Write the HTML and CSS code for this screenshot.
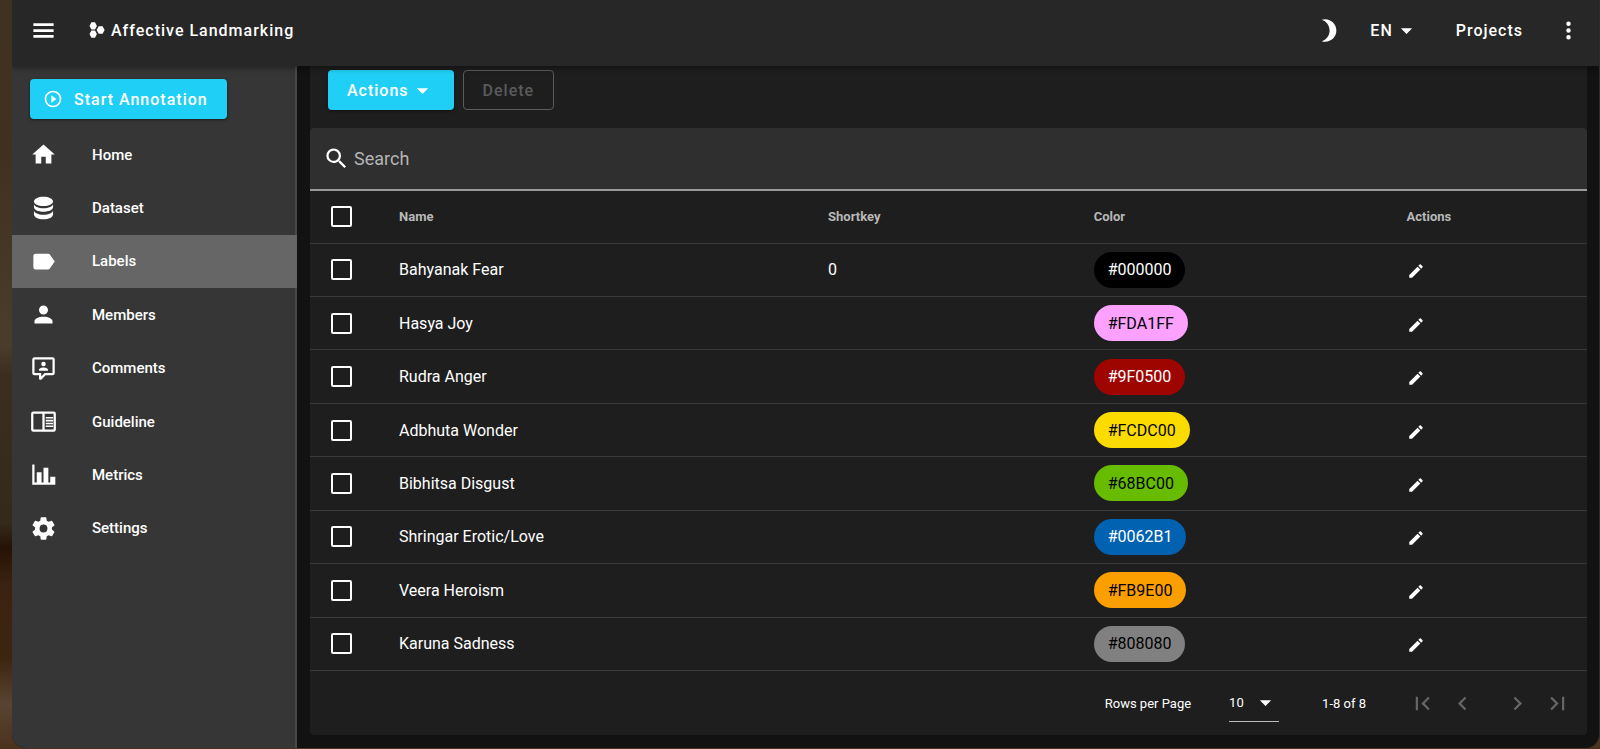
FILE: index.html
```
<!DOCTYPE html>
<html lang="en">
<head>
    <meta charset="UTF-8">
    <meta name="viewport" content="width=device-width, initial-scale=1.0">
    <title>Affective Landmarking</title>
    <link rel="stylesheet" href="styles.css">
</head>
<body>

    <!-- shared icons -->
    <svg class="sprite" aria-hidden="true">
        <symbol id="caret" viewBox="0 0 24 24"><path d="M7,10L12,15L17,10H7Z"/></symbol>
        <symbol id="pencil" viewBox="0 0 24 24"><path d="M20.71,7.04C21.1,6.65 21.1,6 20.71,5.63L18.37,3.29C18,2.9 17.35,2.9 16.96,3.29L15.12,5.12L18.87,8.87M3,17.25V21H6.75L17.81,9.93L14.06,6.18L3,17.25Z"/></symbol>
    </svg>

    <div class="window">

        <!-- top bar -->
        <header class="topbar">
            <button class="icon-btn" aria-label="Menu">
                <svg class="icon" viewBox="0 0 24 24"><path d="M3,5.6H21V8.1H3V5.6M3,10.8H21V13.3H3V10.8M3,16H21V18.5H3V16Z"/></svg>
            </button>
            <a class="brand" href="#">
                <svg class="brand-icon" viewBox="0 0 16 16"><path d="M2.4,0.2H6L7.9,3.9L6,7.6H2.4L0.5,3.9ZM2.4,8.4H6L7.9,12.1L6,15.8H2.4L0.5,12.1ZM9.7,4.2H13.6L15.6,8L13.6,11.8H9.7L7.6,8Z"/></svg>
                Affective Landmarking
            </a>
            <div class="spacer"></div>
            <button class="icon-btn" aria-label="Dark mode">
                <svg class="icon" viewBox="0 0 24 24"><path d="M9 2c-1.05 0-2.05.16-3 .46 4.06 1.27 7 5.06 7 9.54 0 4.48-2.94 8.27-7 9.54.95.3 1.95.46 3 .46 5.52 0 10-4.48 10-10S14.52 2 9 2z"/></svg>
            </button>
            <button class="text-btn lang-btn">EN <svg class="icon" viewBox="0 0 24 24"><use href="#caret"/></svg></button>
            <a class="text-btn" href="#">Projects</a>
            <button class="icon-btn more-btn" aria-label="More">
                <svg class="icon" viewBox="0 0 24 24"><path d="M12,16A2,2 0 0,1 14,18A2,2 0 0,1 12,20A2,2 0 0,1 10,18A2,2 0 0,1 12,16M12,10A2,2 0 0,1 14,12A2,2 0 0,1 12,14A2,2 0 0,1 10,12A2,2 0 0,1 12,10M12,4A2,2 0 0,1 14,6A2,2 0 0,1 12,8A2,2 0 0,1 10,6A2,2 0 0,1 12,4Z"/></svg>
            </button>
        </header>

        <div class="layout">

            <!-- sidebar -->
            <aside class="sidebar">
                <button class="btn btn-primary start-btn">
                    <svg class="icon-small" viewBox="0 0 24 24"><path d="M12,20C7.59,20 4,16.41 4,12C4,7.59 7.59,4 12,4C16.41,4 20,7.59 20,12C20,16.41 16.41,20 12,20M12,2A10,10 0 0,0 2,12A10,10 0 0,0 12,22A10,10 0 0,0 22,12A10,10 0 0,0 12,2M10,16.5L16,12L10,7.5V16.5Z"/></svg>
                    Start Annotation
                </button>
                <nav class="menu">
                    <a href="#"><svg class="icon" viewBox="0 0 24 24"><path d="M10,20V14H14V20H19V12H22L12,3L2,12H5V20H10Z"/></svg>Home</a>
                    <a href="#"><svg class="icon" viewBox="0 0 24 24"><path d="M12,1.5C7.3,1.5 3.5,3.4 3.5,5.7C3.5,8 7.3,9.8 12,9.8C16.7,9.8 20.5,8 20.5,5.7C20.5,3.4 16.7,1.5 12,1.5M3.5,8.2V10.6C3.5,13 7.3,14.8 12,14.8C16.7,14.8 20.5,13 20.5,10.6V8.2C20,10.2 16.7,11.8 12,11.8C7.3,11.8 4,10.2 3.5,8.2M3.5,14V17C3.5,19.7 7.3,21.5 12,21.5C16.7,21.5 20.5,19.7 20.5,17V14C20,16 16.7,17.6 12,17.6C7.3,17.6 4,16 3.5,14Z"/></svg>Dataset</a>
                    <a href="#" class="active"><svg class="icon" viewBox="0 0 24 24"><path d="M17.63,5.84C17.27,5.33 16.67,5 16,5H5A2,2 0 0,0 3,7V17A2,2 0 0,0 5,19H16C16.67,19 17.27,18.66 17.63,18.15L22,12L17.63,5.84Z"/></svg>Labels</a>
                    <a href="#"><svg class="icon" viewBox="0 0 24 24"><path d="M12,4A4,4 0 0,1 16,8A4,4 0 0,1 12,12A4,4 0 0,1 8,8A4,4 0 0,1 12,4M12,14C16.42,14 20,15.79 20,18V20H4V18C4,15.79 7.58,14 12,14Z"/></svg>Members</a>
                    <a href="#"><svg class="icon" viewBox="0 0 24 24"><path d="M9,22A1,1 0 0,1 8,21V18H4A2,2 0 0,1 2,16V4C2,2.89 2.9,2 4,2H20A2,2 0 0,1 22,4V16A2,2 0 0,1 20,18H13.9L10.2,21.71C10,21.9 9.75,22 9.5,22H9M10,16V19.08L13.08,16H20V4H4V16H10M16,14H8V13C8,11.67 10.67,11 12,11C13.33,11 16,11.67 16,13V14M12,6A2,2 0 0,1 14,8A2,2 0 0,1 12,10A2,2 0 0,1 10,8A2,2 0 0,1 12,6Z"/></svg>Comments</a>
                    <a href="#"><svg class="icon" viewBox="0 0 24 24"><path d="M21,3H3A2,2 0 0,0 1,5V19A2,2 0 0,0 3,21H21A2,2 0 0,0 23,19V5A2,2 0 0,0 21,3M3,19V5H11V19H3M21,19H13V5H21V19M14,8H20.5V9.4H14V8M14,10.5H20.5V11.9H14V10.5M14,13H20.5V14.4H14V13M14,15.5H20.5V16.9H14V15.5Z"/></svg>Guideline</a>
                    <a href="#"><svg class="icon" viewBox="0 0 24 24"><path d="M22.5,21H2V3H4V19H6V10H10.3V19H12V6H16.3V19H18V14H22.5V21Z"/></svg>Metrics</a>
                    <a href="#"><svg class="icon" viewBox="0 0 24 24"><path d="M12,15.5A3.5,3.5 0 0,1 8.5,12A3.5,3.5 0 0,1 12,8.5A3.5,3.5 0 0,1 15.5,12A3.5,3.5 0 0,1 12,15.5M19.43,12.97C19.47,12.65 19.5,12.33 19.5,12C19.5,11.67 19.47,11.34 19.43,11L21.54,9.37C21.73,9.22 21.78,8.95 21.66,8.73L19.66,5.27C19.54,5.05 19.27,4.96 19.05,5.05L16.56,6.05C16.04,5.66 15.5,5.32 14.87,5.07L14.5,2.42C14.46,2.18 14.25,2 14,2H10C9.75,2 9.54,2.18 9.5,2.42L9.13,5.07C8.5,5.32 7.96,5.66 7.44,6.05L4.95,5.05C4.73,4.96 4.46,5.05 4.34,5.27L2.34,8.73C2.21,8.95 2.27,9.22 2.46,9.37L4.57,11C4.53,11.34 4.5,11.67 4.5,12C4.5,12.33 4.53,12.65 4.57,12.97L2.46,14.63C2.27,14.78 2.21,15.05 2.34,15.27L4.34,18.73C4.46,18.95 4.73,19.03 4.95,18.95L7.44,17.94C7.96,18.34 8.5,18.68 9.13,18.93L9.5,21.58C9.54,21.82 9.75,22 10,22H14C14.25,22 14.46,21.82 14.5,21.58L14.87,18.93C15.5,18.67 16.04,18.34 16.56,17.94L19.05,18.95C19.27,19.03 19.54,18.95 19.66,18.73L21.66,15.27C21.78,15.05 21.73,14.78 21.54,14.63L19.43,12.97Z"/></svg>Settings</a>
                </nav>
            </aside>

            <!-- labels table -->
            <main class="content">
                <div class="card">
                    <div class="toolbar">
                        <button class="btn btn-primary actions-btn">Actions <svg class="icon" viewBox="0 0 24 24"><use href="#caret"/></svg></button>
                        <button class="btn btn-outline" disabled>Delete</button>
                    </div>

                    <label class="search">
                        <svg class="icon" viewBox="0 0 24 24"><path d="M9.5,3A6.5,6.5 0 0,1 16,9.5C16,11.11 15.41,12.59 14.44,13.73L14.71,14H15.5L20.5,19L19,20.5L14,15.5V14.71L13.73,14.44C12.59,15.41 11.11,16 9.5,16A6.5,6.5 0 0,1 3,9.5A6.5,6.5 0 0,1 9.5,3M9.5,5C7,5 5,7 5,9.5C5,12 7,14 9.5,14C12,14 14,12 14,9.5C14,7 12,5 9.5,5Z"/></svg>
                        <input type="text" placeholder="Search" aria-label="Search">
                    </label>

                    <table class="labels">
                        <thead>
                            <tr>
                                <th class="col-check"><input type="checkbox" aria-label="Select all"></th>
                                <th class="col-name">Name</th>
                                <th class="col-key">Shortkey</th>
                                <th class="col-color">Color</th>
                                <th>Actions</th>
                            </tr>
                        </thead>
                        <tbody>
                            <tr>
                                <td class="col-check"><input type="checkbox" aria-label="Bahyanak Fear"></td>
                                <td>Bahyanak Fear</td>
                                <td>0</td>
                                <td><span class="chip chip-black">#000000</span></td>
                                <td><button class="edit-btn" aria-label="Edit"><svg class="icon-edit" viewBox="0 0 24 24"><use href="#pencil"/></svg></button></td>
                            </tr>
                            <tr>
                                <td class="col-check"><input type="checkbox" aria-label="Hasya Joy"></td>
                                <td>Hasya Joy</td>
                                <td></td>
                                <td><span class="chip chip-pink">#FDA1FF</span></td>
                                <td><button class="edit-btn" aria-label="Edit"><svg class="icon-edit" viewBox="0 0 24 24"><use href="#pencil"/></svg></button></td>
                            </tr>
                            <tr>
                                <td class="col-check"><input type="checkbox" aria-label="Rudra Anger"></td>
                                <td>Rudra Anger</td>
                                <td></td>
                                <td><span class="chip chip-red">#9F0500</span></td>
                                <td><button class="edit-btn" aria-label="Edit"><svg class="icon-edit" viewBox="0 0 24 24"><use href="#pencil"/></svg></button></td>
                            </tr>
                            <tr>
                                <td class="col-check"><input type="checkbox" aria-label="Adbhuta Wonder"></td>
                                <td>Adbhuta Wonder</td>
                                <td></td>
                                <td><span class="chip chip-yellow">#FCDC00</span></td>
                                <td><button class="edit-btn" aria-label="Edit"><svg class="icon-edit" viewBox="0 0 24 24"><use href="#pencil"/></svg></button></td>
                            </tr>
                            <tr>
                                <td class="col-check"><input type="checkbox" aria-label="Bibhitsa Disgust"></td>
                                <td>Bibhitsa Disgust</td>
                                <td></td>
                                <td><span class="chip chip-green">#68BC00</span></td>
                                <td><button class="edit-btn" aria-label="Edit"><svg class="icon-edit" viewBox="0 0 24 24"><use href="#pencil"/></svg></button></td>
                            </tr>
                            <tr>
                                <td class="col-check"><input type="checkbox" aria-label="Shringar Erotic/Love"></td>
                                <td>Shringar Erotic/Love</td>
                                <td></td>
                                <td><span class="chip chip-blue">#0062B1</span></td>
                                <td><button class="edit-btn" aria-label="Edit"><svg class="icon-edit" viewBox="0 0 24 24"><use href="#pencil"/></svg></button></td>
                            </tr>
                            <tr>
                                <td class="col-check"><input type="checkbox" aria-label="Veera Heroism"></td>
                                <td>Veera Heroism</td>
                                <td></td>
                                <td><span class="chip chip-orange">#FB9E00</span></td>
                                <td><button class="edit-btn" aria-label="Edit"><svg class="icon-edit" viewBox="0 0 24 24"><use href="#pencil"/></svg></button></td>
                            </tr>
                            <tr>
                                <td class="col-check"><input type="checkbox" aria-label="Karuna Sadness"></td>
                                <td>Karuna Sadness</td>
                                <td></td>
                                <td><span class="chip chip-gray">#808080</span></td>
                                <td><button class="edit-btn" aria-label="Edit"><svg class="icon-edit" viewBox="0 0 24 24"><use href="#pencil"/></svg></button></td>
                            </tr>
                        </tbody>
                    </table>

                    <div class="pagination">
                        <label for="rows">Rows per Page</label>
                        <div class="select">
                            <select id="rows">
                                <option>10</option>
                                <option>50</option>
                                <option>100</option>
                            </select>
                            <svg class="icon" viewBox="0 0 24 24"><use href="#caret"/></svg>
                        </div>
                        <span class="range">1-8 of 8</span>
                        <div class="pages">
                            <button class="page-btn" disabled aria-label="First page"><svg class="icon" viewBox="0 0 24 24"><path d="M18.41,16.59L13.82,12L18.41,7.41L17,6L11,12L17,18L18.41,16.59M6,6H8V18H6V6Z"/></svg></button>
                            <button class="page-btn" disabled aria-label="Previous page"><svg class="icon" viewBox="0 0 24 24"><path d="M15.41,16.58L10.83,12L15.41,7.41L14,6L8,12L14,18L15.41,16.58Z"/></svg></button>
                        </div>
                        <div class="pages">
                            <button class="page-btn" disabled aria-label="Next page"><svg class="icon" viewBox="0 0 24 24"><path d="M8.59,16.58L13.17,12L8.59,7.41L10,6L16,12L10,18L8.59,16.58Z"/></svg></button>
                            <button class="page-btn" disabled aria-label="Last page"><svg class="icon" viewBox="0 0 24 24"><path d="M5.59,7.41L10.18,12L5.59,16.59L7,18L13,12L7,6L5.59,7.41M16,6H18V18H16V6Z"/></svg></button>
                        </div>
                    </div>
                </div>
            </main>
        </div>
    </div>

</body>
</html>
```
FILE: styles.css
```
* {
    box-sizing: border-box;
}

body {
    margin: 0;
    padding: 0 0 1px 12px;
    min-height: 100vh;
    display: flex;
    background: linear-gradient(#403222 0%, #40301f 20%, #4a3d2c 46%, #3b2e20 50%, #35291c 70%, #251306 73%, #3a2210 78%, #3d2610 88%, #584430 94%, #4a321e 100%);
    font-family: Roboto, sans-serif;
    font-size: 16px;
    color: #fff;
}

button, input, select {
    font: inherit;
    color: inherit;
}

button {
    border: none;
    padding: 0;
    background: none;
    cursor: pointer;
}

a {
    color: inherit;
    text-decoration: none;
}

.sprite {
    display: none;
}

.icon, .icon-small, .icon-edit {
    width: 27px;
    height: 27px;
    fill: currentColor;
    flex-shrink: 0;
}

.icon-small {
    width: 20px;
    height: 20px;
}

.icon-edit {
    width: 18px;
    height: 18px;
}

.window {
    flex: 1;
    display: flex;
    flex-direction: column;
    background: #121212;
    border-right: 1px solid #2c2c2c;
    border-radius: 0 0 14px 14px;
    overflow: hidden;
}

/* top bar */
.topbar {
    display: flex;
    align-items: center;
    height: 66px;
    padding: 0 17px 6px 18px;
    background: #272727;
    box-shadow: 0 2px 6px rgba(0, 0, 0, 0.4);
    z-index: 1;
}

.icon-btn {
    display: flex;
}

.brand, .text-btn, .btn {
    display: flex;
    align-items: center;
    font-weight: 500;
    letter-spacing: 1px;
}

.brand {
    gap: 6px;
    margin-left: 32px;
}

.brand-icon {
    width: 16px;
    height: 16px;
    fill: currentColor;
}

.spacer {
    flex: 1;
}

.lang-btn {
    margin: 0 36px 0 28px;
}

.more-btn {
    margin-left: 32px;
}

.layout {
    flex: 1;
    display: flex;
}

/* sidebar */
.sidebar {
    width: 285px;
    flex-shrink: 0;
    padding-top: 13px;
    background: #363636;
    border-right: 2px solid #484848;
}

.btn {
    height: 40px;
    border-radius: 4px;
}

.btn-primary {
    background: #20cff5;
    box-shadow: 0 1px 3px rgba(0, 0, 0, 0.5);
}

.btn-outline {
    padding: 0 19px;
    border: 1px solid #5b5b5b;
    color: #5b5b5b;
}

.start-btn {
    gap: 11px;
    margin-left: 18px;
    padding: 0 19px 0 13px;
}

.menu {
    display: grid;
    grid-auto-rows: 1fr;
    height: 427px;
    margin-top: 9px;
}

.menu a {
    display: flex;
    align-items: center;
    gap: 35px;
    padding-left: 18px;
    font-size: 15px;
    font-weight: 500;
}

.menu .active {
    margin-right: -2px;
    background: #666;
}

/* content */
.content {
    flex: 1;
    padding: 0 12px 13px 13px;
}

.card {
    background: #1e1e1e;
    border-radius: 0 0 4px 4px;
}

.toolbar {
    display: flex;
    gap: 9px;
    padding: 4px 18px 18px;
}

.actions-btn {
    padding: 0 18px 0 19px;
}

.search {
    display: flex;
    align-items: center;
    gap: 4px;
    height: 63px;
    padding: 0 13px;
    background: #2f2f2f;
    border-bottom: 2px solid #999;
    border-radius: 4px 4px 0 0;
}

.search input {
    flex: 1;
    border: none;
    padding: 0;
    background: none;
    outline: none;
    font-size: 18px;
}

.search input::placeholder {
    color: #b5b5b5;
}

.labels {
    width: 100%;
    height: 480px;
    table-layout: fixed;
    border-collapse: collapse;
}

.labels th, .labels td {
    height: 53px;
    padding: 0 18px;
    text-align: left;
    border-bottom: 1px solid #3a3a3a;
}

.labels th {
    height: 52px;
    font-size: 13px;
    font-weight: 700;
    color: #b8b8b8;
}

.labels .col-check {
    width: 71px;
    padding-left: 21px;
}

.col-name {
    width: 33.6%;
}

.col-key {
    width: 20.8%;
}

.col-color {
    width: 24.5%;
}

.labels input {
    appearance: none;
    display: block;
    width: 21px;
    height: 21px;
    margin: 0;
    border: 2px solid #fff;
    border-radius: 2px;
}

.chip {
    display: inline-flex;
    align-items: center;
    height: 36px;
    padding: 0 14px;
    border-radius: 18px;
}

.chip-black { background: #000; }
.chip-pink { background: #fda1ff; color: #000; }
.chip-red { background: #9f0500; }
.chip-yellow { background: #fcdc00; color: #000; }
.chip-green { background: #68bc00; color: #000; }
.chip-blue { background: #0062b1; }
.chip-orange { background: #fb9e00; color: #000; }
.chip-gray { background: #808080; color: #000; }

.edit-btn {
    display: flex;
    padding-top: 3px;
}

/* pagination */
.pagination {
    display: flex;
    align-items: center;
    justify-content: flex-end;
    height: 64px;
    padding-right: 16px;
    font-size: 13px;
}

.select {
    display: flex;
    align-items: center;
    position: relative;
    width: 50px;
    height: 38px;
    margin: 0 43px 0 38px;
    border-bottom: 1px solid #bbb;
}

.select select {
    appearance: none;
    width: 100%;
    border: none;
    padding: 0;
    background: none;
    outline: none;
}

.select .icon {
    position: absolute;
    right: 0;
    pointer-events: none;
}

.range {
    margin-right: 43px;
}

.pages {
    display: flex;
    gap: 13px;
}

.pages + .pages {
    margin-left: 28px;
}

.page-btn {
    display: flex;
    color: #666;
}
```
